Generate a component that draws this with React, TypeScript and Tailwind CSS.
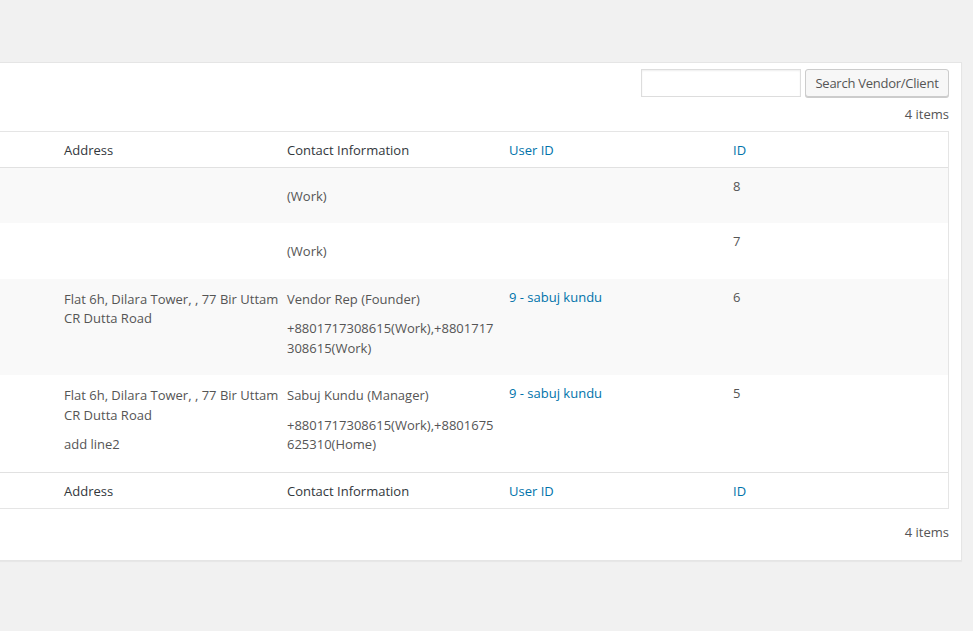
import React from "react";

const cols = "grid grid-cols-[80px_223px_222px_224px_1fr]";

function HeadRow({ top }: { top?: boolean }) {
  return (
    <div
      className={`${cols} text-[#32373c] leading-[19px] ${
        top ? "border-b border-[#e1e1e1]" : "border-t border-[#e1e1e1]"
      }`}
    >
      <div />
      <div className="px-[10px] pt-[9px] pb-[7px]">Address</div>
      <div className="px-[10px] pt-[9px] pb-[7px]">Contact Information</div>
      <div className="px-[10px] pt-[9px] pb-[7px] text-[#0073aa]">User ID</div>
      <div className="px-[10px] pt-[9px] pb-[7px] text-[#0073aa]">ID</div>
    </div>
  );
}

type Row = {
  id: string;
  user?: string;
  address: string[][];
  name?: string;
  phone: string[];
};

const rows: Row[] = [
  { id: "8", address: [], phone: ["(Work)"] },
  { id: "7", address: [], phone: ["(Work)"] },
  {
    id: "6",
    user: "9 - sabuj kundu",
    address: [["Flat 6h, Dilara Tower, , 77 Bir Uttam", "CR Dutta Road"]],
    name: "Vendor Rep (Founder)",
    phone: ["+8801717308615(Work),+8801717", "308615(Work)"],
  },
  {
    id: "5",
    user: "9 - sabuj kundu",
    address: [["Flat 6h, Dilara Tower, , 77 Bir Uttam", "CR Dutta Road"], ["add line2"]],
    name: "Sabuj Kundu (Manager)",
    phone: ["+8801717308615(Work),+8801675", "625310(Home)"],
  },
];

function Lines({ lines }: { lines: string[] }) {
  return (
    <>
      {lines.map((l, i) => (
        <React.Fragment key={i}>
          {i > 0 && <br />}
          {l}
        </React.Fragment>
      ))}
    </>
  );
}

export default function App() {
  return (
    <div className="min-h-[631px] overflow-hidden bg-[#f1f1f1] pt-[62px] font-['Open_Sans'] text-[13px] leading-[19.5px] text-[#555]">
      <div className="ml-[-40px] w-[1002px] border border-[#e5e5e5] bg-white px-[12px] pt-[6px] pb-[18px] shadow-[0_1px_1px_rgba(0,0,0,0.04)]">
        <div className="flex justify-end gap-[4px]">
          <input
            type="text"
            className="h-[28px] w-[160px] border border-[#dddddd] bg-white px-[8px] shadow-[inset_0_1px_2px_rgba(0,0,0,0.07)] outline-none"
          />
          <button className="h-[28px] w-[144px] whitespace-nowrap rounded-[3px] border border-[#cccccc] bg-[#f7f7f7] px-[6px] pb-[1px] leading-[26px] tracking-[-0.25px] text-[#555] shadow-[0_1px_0_#cccccc]">
            Search Vendor/Client
          </button>
        </div>
        <div className="mt-[7px] pt-[1px] text-right">4 items</div>
        <div className="mt-[6px] border border-[#e5e5e5]">
          <HeadRow top />
          {rows.map((r, i) => (
            <div key={r.id} className={`${cols} ${i % 2 === 0 ? "bg-[#f9f9f9]" : "bg-white"}`}>
              <div />
              <div className="whitespace-nowrap px-[10px] pt-[9px] pb-[7px]">
                {r.address.map((a, j) => (
                  <p key={j} className="mt-[2px] mb-[10px]">
                    <Lines lines={a} />
                  </p>
                ))}
              </div>
              <div className="whitespace-nowrap px-[10px] pt-[9px] pb-[7px]">
                <p className="mt-[2px] mb-[10px]">{r.name}</p>
                <p className="mt-[2px] mb-[10px]">
                  <Lines lines={r.phone} />
                </p>
              </div>
              <div className="px-[10px] pt-[9px] pb-[7px] text-[#0073aa]">{r.user}</div>
              <div className="px-[10px] pt-[9px] pb-[7px]">{r.id}</div>
            </div>
          ))}
          <HeadRow />
        </div>
        <div className="mt-[13px] pt-[1px] text-right">4 items</div>
      </div>
    </div>
  );
}
